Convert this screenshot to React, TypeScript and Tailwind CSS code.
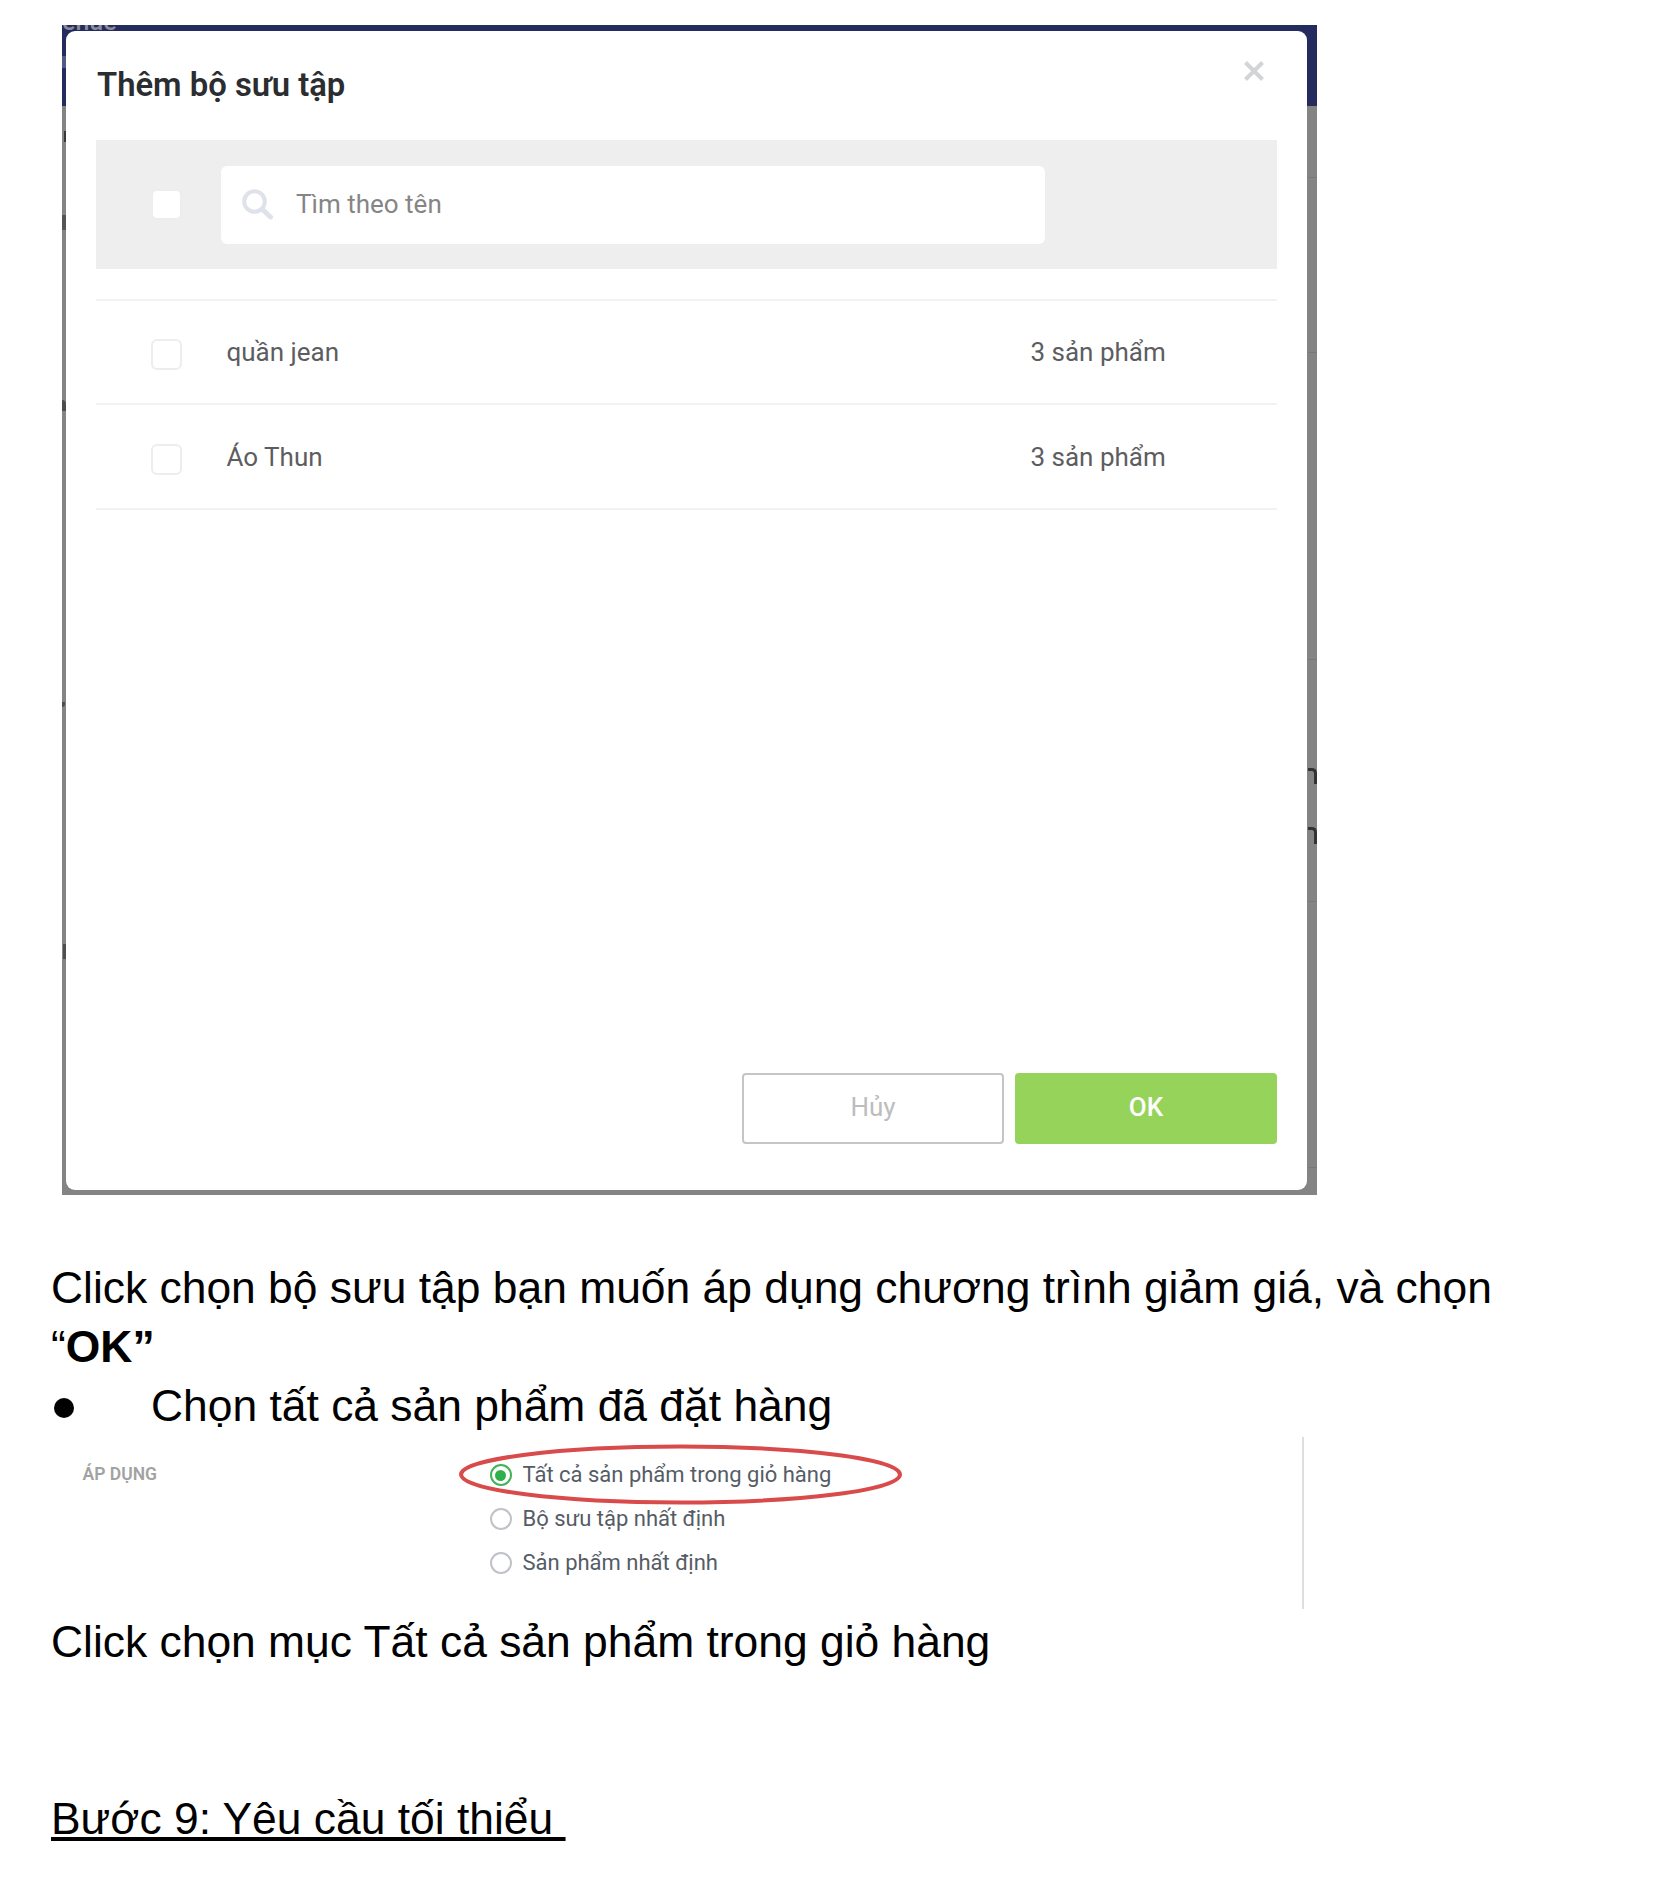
import React from "react";

const roboto = "font-['Roboto',sans-serif]";

function Checkbox({ className = "" }: { className?: string }) {
  return <span className={`block h-[31px] w-[31px] shrink-0 rounded-[6px] border-2 border-[#ebedf0] bg-white ${className}`} />;
}

function CollectionRow({ name, count, height }: { name: string; count: string; height: string }) {
  return (
    <div className={`flex items-end border-b-2 border-[#f2f2f3] pl-[55px] text-[26px] leading-[30px] text-[#5d5d5f] ${height}`}>
      <Checkbox className="mb-[33px]" />
      <span className="mb-[36px] ml-[44.5px] w-[804px] whitespace-nowrap">{name}</span>
      <span className="mb-[36px] whitespace-nowrap">{count}</span>
    </div>
  );
}

function CollectionDialog() {
  return (
    <section
      className={`relative ml-[62px] h-[1170px] w-[1255px] overflow-hidden bg-[linear-gradient(#242b5e_81px,#848484_81px)] pt-[5.5px] pl-[4px] ${roboto}`}
    >
      <span className="absolute top-[-15px] left-0 text-[25px] leading-[24px] font-medium text-[#8b8c98]">enue</span>
      <i className="absolute top-[31px] left-0 h-[12px] w-[4px] bg-[#555a80]" />
      <i className="absolute top-[106px] left-[2px] h-[11px] w-[2px] bg-[#383838]" />
      <i className="absolute top-[190px] left-0 h-[15px] w-[4px] bg-[#555]" />
      <i className="absolute top-[375px] left-0 h-[11px] w-[4px] rounded-tr-[4px] bg-[#4d4d4d]" />
      <i className="absolute top-[677px] left-0 h-[5px] w-[3px] rounded-br-[3px] bg-[#4d4d4d]" />
      <i className="absolute top-[919px] left-[1px] h-[15px] w-[3px] bg-[#4f4f4f]" />
      <i className="absolute top-[152px] right-0 h-px w-[9px] bg-[#797979]" />
      <i className="absolute top-[327px] right-0 h-px w-[9px] bg-[#797979]" />
      <i className="absolute top-[634px] right-0 h-px w-[9px] bg-[#777]" />
      <i className="absolute top-[743px] right-0 h-[16px] w-[9px] rounded-tr-[5px] border-t-[3px] border-r-[3px] border-[#333]" />
      <i className="absolute top-[802px] right-0 h-[17px] w-[9px] rounded-tr-[5px] border-t-[3px] border-r-[3px] border-[#333]" />
      <i className="absolute top-[876px] right-0 h-px w-[9px] bg-[#797979]" />
      <i className="absolute top-[1142px] right-0 h-px w-[9px] bg-[#797979]" />

      <div className="relative flex h-[1159px] w-[1241px] flex-col rounded-[9px] bg-white px-[30px]">
        <header className="flex h-[109.5px] shrink-0 items-start justify-between">
          <h1 className="mt-[35.5px] ml-px text-[32.8px] leading-[38px] font-semibold whitespace-nowrap text-[#2b2d30]">Thêm bộ sưu tập</h1>
          <svg className="mt-[30.5px] mr-[13px] h-[20px] w-[20px]" viewBox="0 0 20 20" stroke="#d3d4d6" strokeWidth="4">
            <path d="M1.5 1.5 18.5 18.5M18.5 1.5 1.5 18.5" />
          </svg>
        </header>
        <div className="flex h-[129px] shrink-0 items-center bg-[#eee] pl-[55px]">
          <Checkbox />
          <div className="ml-[39px] flex h-[78px] w-[824px] items-center rounded-[6px] bg-white pl-[20.5px]">
            <svg className="h-[31px] w-[31px]" viewBox="0 0 31 31" fill="none" stroke="#dfe2eb">
              <circle cx="12.5" cy="12.5" r="10.3" strokeWidth="4" />
              <path d="M20.5 20.5 28.5 28" strokeWidth="5" strokeLinecap="round" />
            </svg>
            <span className="mb-[2px] ml-[23.5px] text-[26px] leading-[30px] whitespace-nowrap text-[#858585]">Tìm theo tên</span>
          </div>
        </div>
        <div className="mt-[30px] shrink-0 border-t-2 border-[#f2f2f3]">
          <CollectionRow name="quần jean" count="3 sản phẩm" height="h-[104px]" />
          <CollectionRow name="Áo Thun" count="3 sản phẩm" height="h-[105px]" />
        </div>
        <footer className="mt-auto mb-[46px] flex justify-end gap-[11px] text-[26px] leading-[30px]">
          <button className="h-[71px] w-[262px] rounded-[4px] border-2 border-[#c5c5c5] bg-white pb-[3px] text-[#bdbdbd]">Hủy</button>
          <button className="h-[71px] w-[262px] rounded-[4px] bg-[#96d35a] pb-[3px] font-medium text-white">OK</button>
        </footer>
      </div>
    </section>
  );
}

function Radio({ label, checked = false }: { label: string; checked?: boolean }) {
  return (
    <div className="flex h-[44px] items-center">
      <span className={`flex h-[22px] w-[22px] items-center justify-center rounded-full border-2 bg-white ${checked ? "border-[#43b257]" : "border-[#bfc2c7]"}`}>
        {checked && <span className="h-[11px] w-[11px] rounded-full bg-[#2fb14a]" />}
      </span>
      <span className="ml-[11px] text-[22px] leading-[26px] whitespace-nowrap text-[#555c66]">{label}</span>
    </div>
  );
}

function ApplyOptions() {
  return (
    <section className={`relative mt-[2px] ml-[62px] flex h-[172px] w-[1242px] border-r-2 border-[#dfdfdf] ${roboto}`}>
      <span className="mt-[26px] ml-[20.5px] w-[407px] text-[17.5px] leading-[22px] font-semibold text-[#a2a2a2]">ÁP DỤNG</span>
      <div className="mt-[16px]">
        <Radio label="Tất cả sản phẩm trong giỏ hàng" checked />
        <Radio label="Bộ sưu tập nhất định" />
        <Radio label="Sản phẩm nhất định" />
      </div>
      <svg className="absolute top-[7px] left-[397px] h-[61px] w-[443px]" viewBox="0 0 443 61" fill="none">
        <ellipse cx="221.5" cy="30.5" rx="219.5" ry="28" stroke="#d94b4b" strokeWidth="4" />
      </svg>
    </section>
  );
}

export default function App() {
  return (
    <main className="h-[1896px] w-[1653px] overflow-hidden bg-white pt-[25px] font-['Liberation_Sans',Arial,sans-serif] text-[44.4px] leading-[59px] text-black">
      <CollectionDialog />
      <div className="pt-[63px] pl-[51px]">
        <p className="whitespace-nowrap">
          Click chọn bộ sưu tập bạn muốn áp dụng chương trình giảm giá, và chọn
          <br />“<b>OK”</b>
        </p>
        <div className="flex">
          <span className="flex w-[100px] items-center pt-[4px] pl-[3px]">
            <i className="h-[20px] w-[20px] rounded-full bg-black" />
          </span>
          <span className="whitespace-nowrap">Chọn tất cả sản phẩm đã đặt hàng</span>
        </div>
      </div>
      <ApplyOptions />
      <div className="pt-[3px] pl-[51px]">
        <p>Click chọn mục Tất cả sản phẩm trong giỏ hàng</p>
        <h2 className="mt-[118px] whitespace-pre underline">{"Bước 9: Yêu cầu tối thiểu "}</h2>
      </div>
    </main>
  );
}
